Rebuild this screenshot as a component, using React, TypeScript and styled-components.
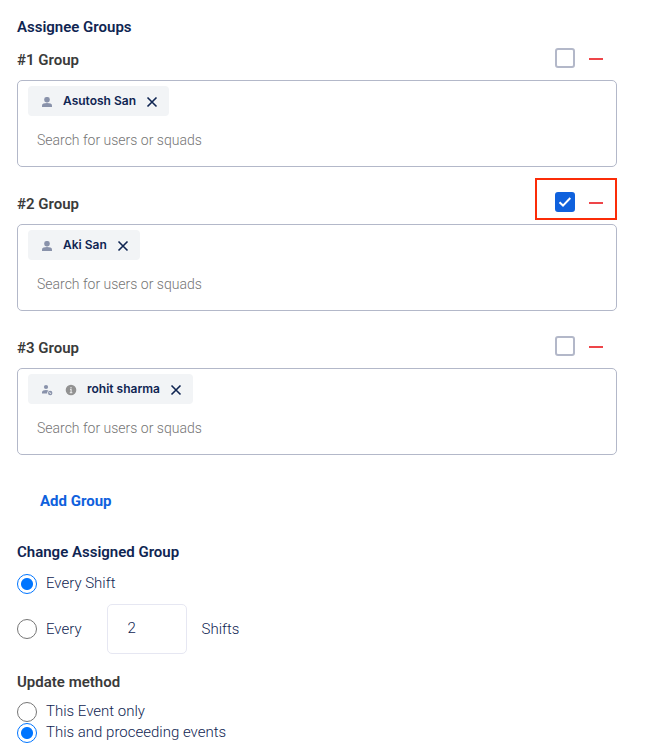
import React, { useState } from "react";
import styled, { createGlobalStyle } from "styled-components";

const GlobalStyle = createGlobalStyle`
  *, *::before, *::after { box-sizing: border-box; }
  body {
    margin: 0;
    background: #fff;
    color: #0f2552;
    font-family: Roboto, "Liberation Sans", sans-serif;
    font-size: 15px;
    line-height: 20px;
  }
  button, input { font: inherit; color: inherit; margin: 0; }
`;

const Page = styled.form`
  padding: 20px 28px 0 17px;
`;

const Title = styled.h2<{ $dark?: boolean }>`
  margin: 0;
  font-size: 15px;
  line-height: 14px;
  font-weight: 600;
  color: ${(p) => (p.$dark ? "#3a3a3a" : "#0f2552")};
`;

const Group = styled.section`
  margin-bottom: 11px;
`;

const GroupHeader = styled.header`
  display: flex;
  align-items: flex-start;
  justify-content: space-between;
  height: 42px;
  margin-bottom: 4px;
`;

const GroupName = styled.h3`
  margin: 0;
  padding-top: 16px;
  font-size: 15px;
  line-height: 20px;
  font-weight: 600;
  color: #3a3a3a;
`;

const Actions = styled.div<{ $highlighted?: boolean }>`
  display: flex;
  align-items: center;
  gap: 14px;
  height: 42px;
  padding: 6px 12px 0 18px;
  border: 2px solid ${(p) => (p.$highlighted ? "#fb2c08" : "transparent")};
`;

const CheckBox = styled.input`
  appearance: none;
  width: 20px;
  height: 20px;
  border: 2px solid #b3b8c9;
  border-radius: 3px;
  background: #fff;
  grid-area: 1 / 1;

  &:checked {
    border-color: #0f61dd;
    background: #0f61dd;
  }
`;

const CheckWrap = styled.span`
  display: grid;
  place-items: center;

  svg {
    grid-area: 1 / 1;
    pointer-events: none;
  }
`;

const IconButton = styled.button`
  display: flex;
  padding: 0;
  border: 0;
  background: none;
  cursor: pointer;
`;

const Picker = styled.div`
  min-height: 87px;
  padding: 5px 10px;
  border: 1px solid #b3b8c9;
  border-radius: 5px;
`;

const Chip = styled.span`
  display: inline-flex;
  align-items: center;
  height: 30px;
  padding: 0 11px 0 13px;
  border-radius: 4px;
  background: #f2f4f6;
  vertical-align: top;

  button { padding-top: 2px; }
`;

const ChipIcons = styled.span`
  display: flex;
  gap: 12px;
  padding-top: 2px;
  margin-right: 10px;
`;

const ChipName = styled.span`
  margin-right: 10px;
  font-family: Inter, sans-serif;
  font-size: 12px;
  font-weight: 600;
`;

const Search = styled.input`
  display: block;
  width: 100%;
  height: 45px;
  padding: 3px 9px 0;
  border: 0;
  outline: 0;
  background: none;
  font-size: 14px;
  font-weight: 300;

  &::placeholder { color: #757575; opacity: 1; }
`;

const AddButton = styled.button`
  display: block;
  margin: 36px 0 0 17px;
  padding: 0 6px;
  border: 0;
  background: none;
  color: #0f61dd;
  font-weight: 700;
  cursor: pointer;
`;

const Options = styled.fieldset<{ $top: number }>`
  margin: ${(p) => p.$top}px 0 0;
  padding: 0;
  border: 0;
  min-width: 0;

  legend { padding: 0; }
`;

const RadioText = styled.label`
  font-weight: 300;
`;

const RadioRow = styled.div<{ $top?: number }>`
  display: flex;
  align-items: center;
  height: 21px;
  margin-top: ${(p) => p.$top ?? 0}px;

  ${RadioText} { padding-bottom: 2px; }
`;

const ShiftRow = styled.div`
  display: flex;
  align-items: center;
  margin-top: 10px;
`;

const RadioInput = styled.input`
  appearance: none;
  flex: none;
  width: 20px;
  height: 20px;
  margin-right: 9px;
  border: 1px solid #767676;
  border-radius: 50%;

  &:checked {
    border-color: #0075ff;
    background: radial-gradient(circle, #0075ff 5.5px, #fff 6.5px);
  }
`;

const Shifts = styled.input`
  width: 80px;
  height: 50px;
  margin: 0 15px 0 25px;
  padding: 0 20px 2px;
  border: 1px solid #e6e7f2;
  border-radius: 5px;
  font-weight: 300;
`;

const UserIcon = () => (
  <svg width="12" height="12" viewBox="0 0 12 12" fill="#8992aa" aria-hidden="true">
    <rect x="3.2" y="1" width="5.6" height="5.4" rx="2.3" />
    <path d="M1 11V9.3C1 7.7 3.3 7 6 7s5 .7 5 2.3V11z" />
  </svg>
);

const UserRoleIcon = () => (
  <svg width="12" height="12" viewBox="0 0 12 12" fill="#8992aa" aria-hidden="true">
    <circle cx="5" cy="3" r="2.1" />
    <path d="M1 9.6V8.200C1 6.700 3 5.900 5 5.900c1 0 1.900.2 2.500.5C6.400 7.200 6 8.300 6.200 9.600z" />
    <circle cx="9.200" cy="9" r="1.600" fill="none" stroke="#8992aa" strokeWidth="1.200" />
    <path d="m8.200 10 2-2" stroke="#8992aa" strokeWidth=".9" />
  </svg>
);

const InfoIcon = () => (
  <svg width="12" height="12" viewBox="0 0 12 12" aria-hidden="true">
    <circle cx="6" cy="6" r="5.300" fill="#929292" />
    <path d="M6 3v1.400M5 5.500h1.100v3M4.800 8.700h2.500" fill="none" stroke="#e4e4e4" strokeWidth="1.200" />
  </svg>
);

const CloseIcon = () => (
  <svg width="12" height="12" viewBox="0 0 12 12" fill="none" stroke="#0f2552" strokeWidth="1.6" aria-hidden="true">
    <path d="m1.500 1.500 9 9m0-9-9 9" />
  </svg>
);

const MinusIcon = () => (
  <svg width="14" height="20" viewBox="0 0 14 20" fill="#ee4549" aria-hidden="true">
    <path d="M0 10h14v2H0z" />
  </svg>
);

const TickIcon = () => (
  <svg width="14" height="14" viewBox="0 0 14 14" fill="none" stroke="#fff" strokeWidth="2" aria-hidden="true">
    <path d="m1.500 7.300 3.500 3.300L12.300 3" />
  </svg>
);

type Member = { name: string; info?: boolean };
const groups: Member[] = [
  { name: "Asutosh San" },
  { name: "Aki San" },
  { name: "rohit sharma", info: true },
];

function GroupEditor({ index, member, highlighted }: { index: number; member: Member; highlighted: boolean }) {
  const [checked, setChecked] = useState(highlighted);
  const label = `#${index} Group`;
  return (
    <Group>
      <GroupHeader>
        <GroupName>{label}</GroupName>
        <Actions $highlighted={highlighted}>
          <CheckWrap>
            <CheckBox
              type="checkbox"
              aria-label={`Select ${label}`}
              checked={checked}
              onChange={(e) => setChecked(e.target.checked)}
            />
            {checked && <TickIcon />}
          </CheckWrap>
          <IconButton type="button" aria-label={`Remove ${label}`}>
            <MinusIcon />
          </IconButton>
        </Actions>
      </GroupHeader>
      <Picker>
        <Chip>
          <ChipIcons>
            {member.info ? <UserRoleIcon /> : <UserIcon />}
            {member.info && <InfoIcon />}
          </ChipIcons>
          <ChipName>{member.name}</ChipName>
          <IconButton type="button" aria-label={`Remove ${member.name}`}>
            <CloseIcon />
          </IconButton>
        </Chip>
        <Search aria-label={`Members of ${label}`} placeholder="Search for users or squads" />
      </Picker>
    </Group>
  );
}

export default function App() {
  return (
    <>
      <GlobalStyle />
      <Page>
        <Title>Assignee Groups</Title>
        {groups.map((member, i) => (
          <GroupEditor key={member.name} index={i + 1} member={member} highlighted={i === 1} />
        ))}
        <AddButton type="button">Add Group</AddButton>
        <Options $top={31}>
          <legend><Title as="span">Change Assigned Group</Title></legend>
          <RadioRow $top={11}>
            <RadioInput type="radio" name="rotation" id="every-shift" defaultChecked />
            <RadioText htmlFor="every-shift">Every Shift</RadioText>
          </RadioRow>
          <ShiftRow>
            <RadioInput type="radio" name="rotation" id="every-n" />
            <RadioText htmlFor="every-n">Every</RadioText>
            <Shifts id="shift-count" aria-label="Number of shifts" defaultValue="2" />
            <RadioText htmlFor="shift-count">Shifts</RadioText>
          </ShiftRow>
        </Options>
        <Options $top={18}>
          <legend><Title as="span" $dark>Update method</Title></legend>
          <RadioRow $top={9}>
            <RadioInput type="radio" name="update" id="this-event" />
            <RadioText htmlFor="this-event">This Event only</RadioText>
          </RadioRow>
          <RadioRow>
            <RadioInput type="radio" name="update" id="following-events" defaultChecked />
            <RadioText htmlFor="following-events">This and proceeding events</RadioText>
          </RadioRow>
        </Options>
      </Page>
    </>
  );
}
